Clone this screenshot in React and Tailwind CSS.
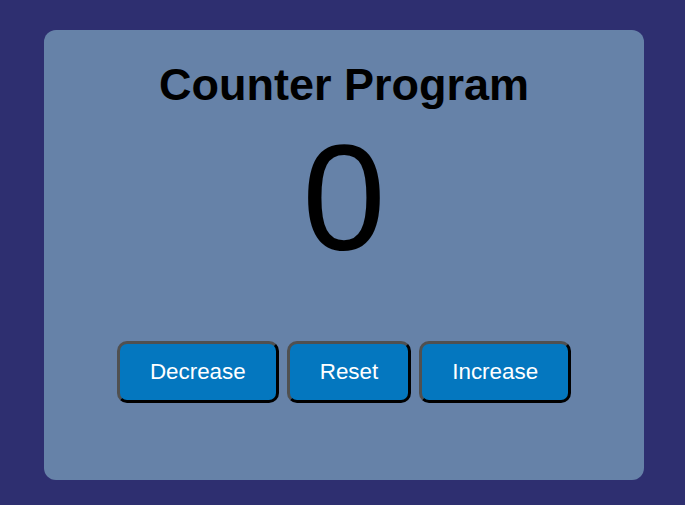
import { useState } from 'react'

export default function App() {
  const [count, setCount] = useState(0)

  const btn =
    'rounded-[10px] border-[3px] border-solid border-t-[#505050] border-l-[#505050] border-b-black border-r-black bg-[#0477bf] px-[30px] py-[15px] text-[22.4px] leading-[26px] text-white'

  return (
    <div className="min-h-[505px] w-full bg-[#2e2f70] pl-[44px] pt-[30px] font-['Liberation_Sans',Arial,sans-serif]">
      <div className="flex h-[450px] w-[600px] flex-col items-center rounded-[12px] bg-[#6682a8] pt-[29px]">
        <h1 className="text-[45px] font-bold leading-[52px] text-black">Counter Program</h1>
        <div className="mt-[12px] text-[150px] leading-[150px] text-black">{count}</div>
        <div className="mt-[68px] flex gap-[8px]">
          <button className={btn} onClick={() => setCount(c => c - 1)}>Decrease</button>
          <button className={btn} onClick={() => setCount(0)}>Reset</button>
          <button className={btn} onClick={() => setCount(c => c + 1)}>Increase</button>
        </div>
      </div>
    </div>
  )
}
